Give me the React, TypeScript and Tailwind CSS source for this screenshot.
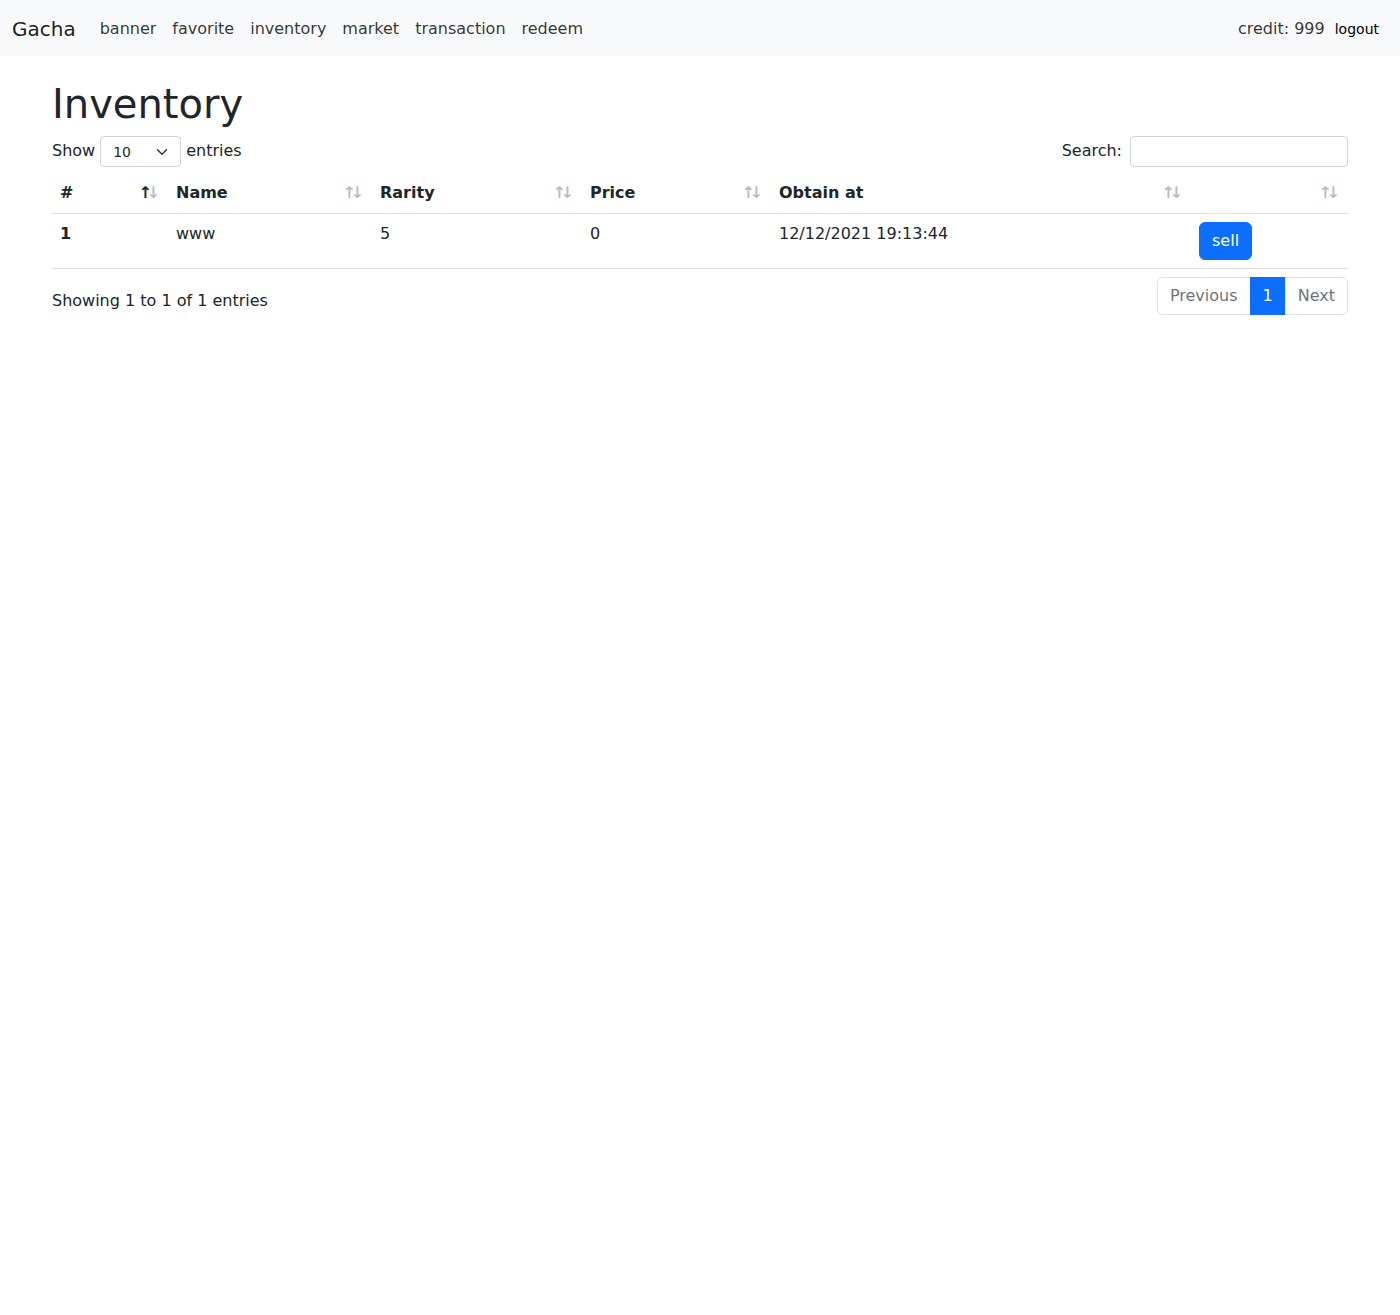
import React from "react";

const font = { fontFamily: '"DejaVu Sans", "Noto Sans", sans-serif' };

function SortTh({ label, w, active }: { label: string; w: string; active?: boolean }) {
  return (
    <th className={`relative text-left font-bold ${w} pl-2 pr-[30px] pt-[8px] pb-[8px] border-b border-[#dee2e6] align-bottom`}>
      {label}
      <span className="absolute right-2 top-[8px] leading-6 tracking-[-5.4px] pr-[5.4px]">
        <span className={active ? "opacity-100" : "opacity-30"}>↑</span>
        <span className="opacity-30">↓</span>
      </span>
    </th>
  );
}

export default function App() {
  const links = ["banner", "favorite", "inventory", "market", "transaction", "redeem"];
  return (
    <div className="min-h-[1315px] bg-white text-[#212529] text-base leading-6" style={font}>
      <nav className="h-14 bg-[#f8f9fa] flex items-center pl-3 pr-[13px] pt-[2px]">
        <span className="text-[20px] leading-[30px] text-[rgba(0,0,0,0.9)] mr-4">Gacha</span>
        <div className="flex">
          {links.map((l) => (
            <a key={l} className="px-2 py-2 text-[rgba(0,0,0,0.8)]">{l}</a>
          ))}
        </div>
        <div className="ml-auto flex items-center">
          <span className="text-[rgba(0,0,0,0.8)]">credit: 999</span>
          <span className="text-sm text-black px-2 ml-[2px] -mt-px">logout</span>
        </div>
      </nav>

      <div className="w-[1320px] mx-auto px-3">
        <h1 className="text-[40px] leading-[48px] font-medium mt-6 mb-2">Inventory</h1>
        <div className="flex justify-between items-start">
          <div className="flex items-center h-[31px]">
            <span className="pb-[2px]">Show</span>
            <div className="mx-[5px] w-[81px] h-[31px] border border-[#ced4da] rounded-[4px] flex items-center pl-3 pr-3 justify-between">
              <span className="text-sm">10</span>
              <svg width="12" height="12" viewBox="0 0 16 16" fill="none" stroke="#343a40" strokeWidth="2" strokeLinecap="round" strokeLinejoin="round">
                <path d="M2 5l6 6 6-6" />
              </svg>
            </div>
            <span className="pb-[2px]">entries</span>
          </div>
          <div className="flex items-center h-[31px]">
            <span className="pb-[2px]">Search:</span>
            <div className="ml-2 w-[218px] h-[31px] border border-[#ced4da] rounded-[4px]" />
          </div>
        </div>

        <table className="w-full table-fixed border-collapse mt-[6px]">
          <thead>
            <tr>
              <SortTh label="#" w="w-[116px]" active />
              <SortTh label="Name" w="w-[204px]" />
              <SortTh label="Rarity" w="w-[210px]" />
              <SortTh label="Price" w="w-[189px]" />
              <SortTh label="Obtain at" w="w-[420px]" />
              <SortTh label="" w="w-[157px]" />
            </tr>
          </thead>
          <tbody>
            <tr className="border-b border-[#dee2e6]">
              <td className="p-2 align-top font-bold">1</td>
              <td className="p-2 align-top">www</td>
              <td className="p-2 align-top">5</td>
              <td className="p-2 align-top">0</td>
              <td className="p-2 align-top">12/12/2021 19:13:44</td>
              <td className="p-2 align-top">
                <button className="bg-[#0d6efd] text-white border border-[#0d6efd] rounded-[6px] px-3 py-[6px] leading-6">sell</button>
              </td>
            </tr>
          </tbody>
        </table>

        <div className="flex justify-between items-start mt-2">
          <div className="pt-[12px]">Showing 1 to 1 of 1 entries</div>
          <div className="flex">
            <span className="px-3 py-[6px] border border-[#dee2e6] rounded-l-[6px] text-[#6c757d]">Previous</span>
            <span className="px-3 py-[6px] border border-[#0d6efd] bg-[#0d6efd] text-white -ml-px">1</span>
            <span className="px-3 py-[6px] border border-[#dee2e6] rounded-r-[6px] text-[#6c757d] -ml-px">Next</span>
          </div>
        </div>
      </div>
    </div>
  );
}
